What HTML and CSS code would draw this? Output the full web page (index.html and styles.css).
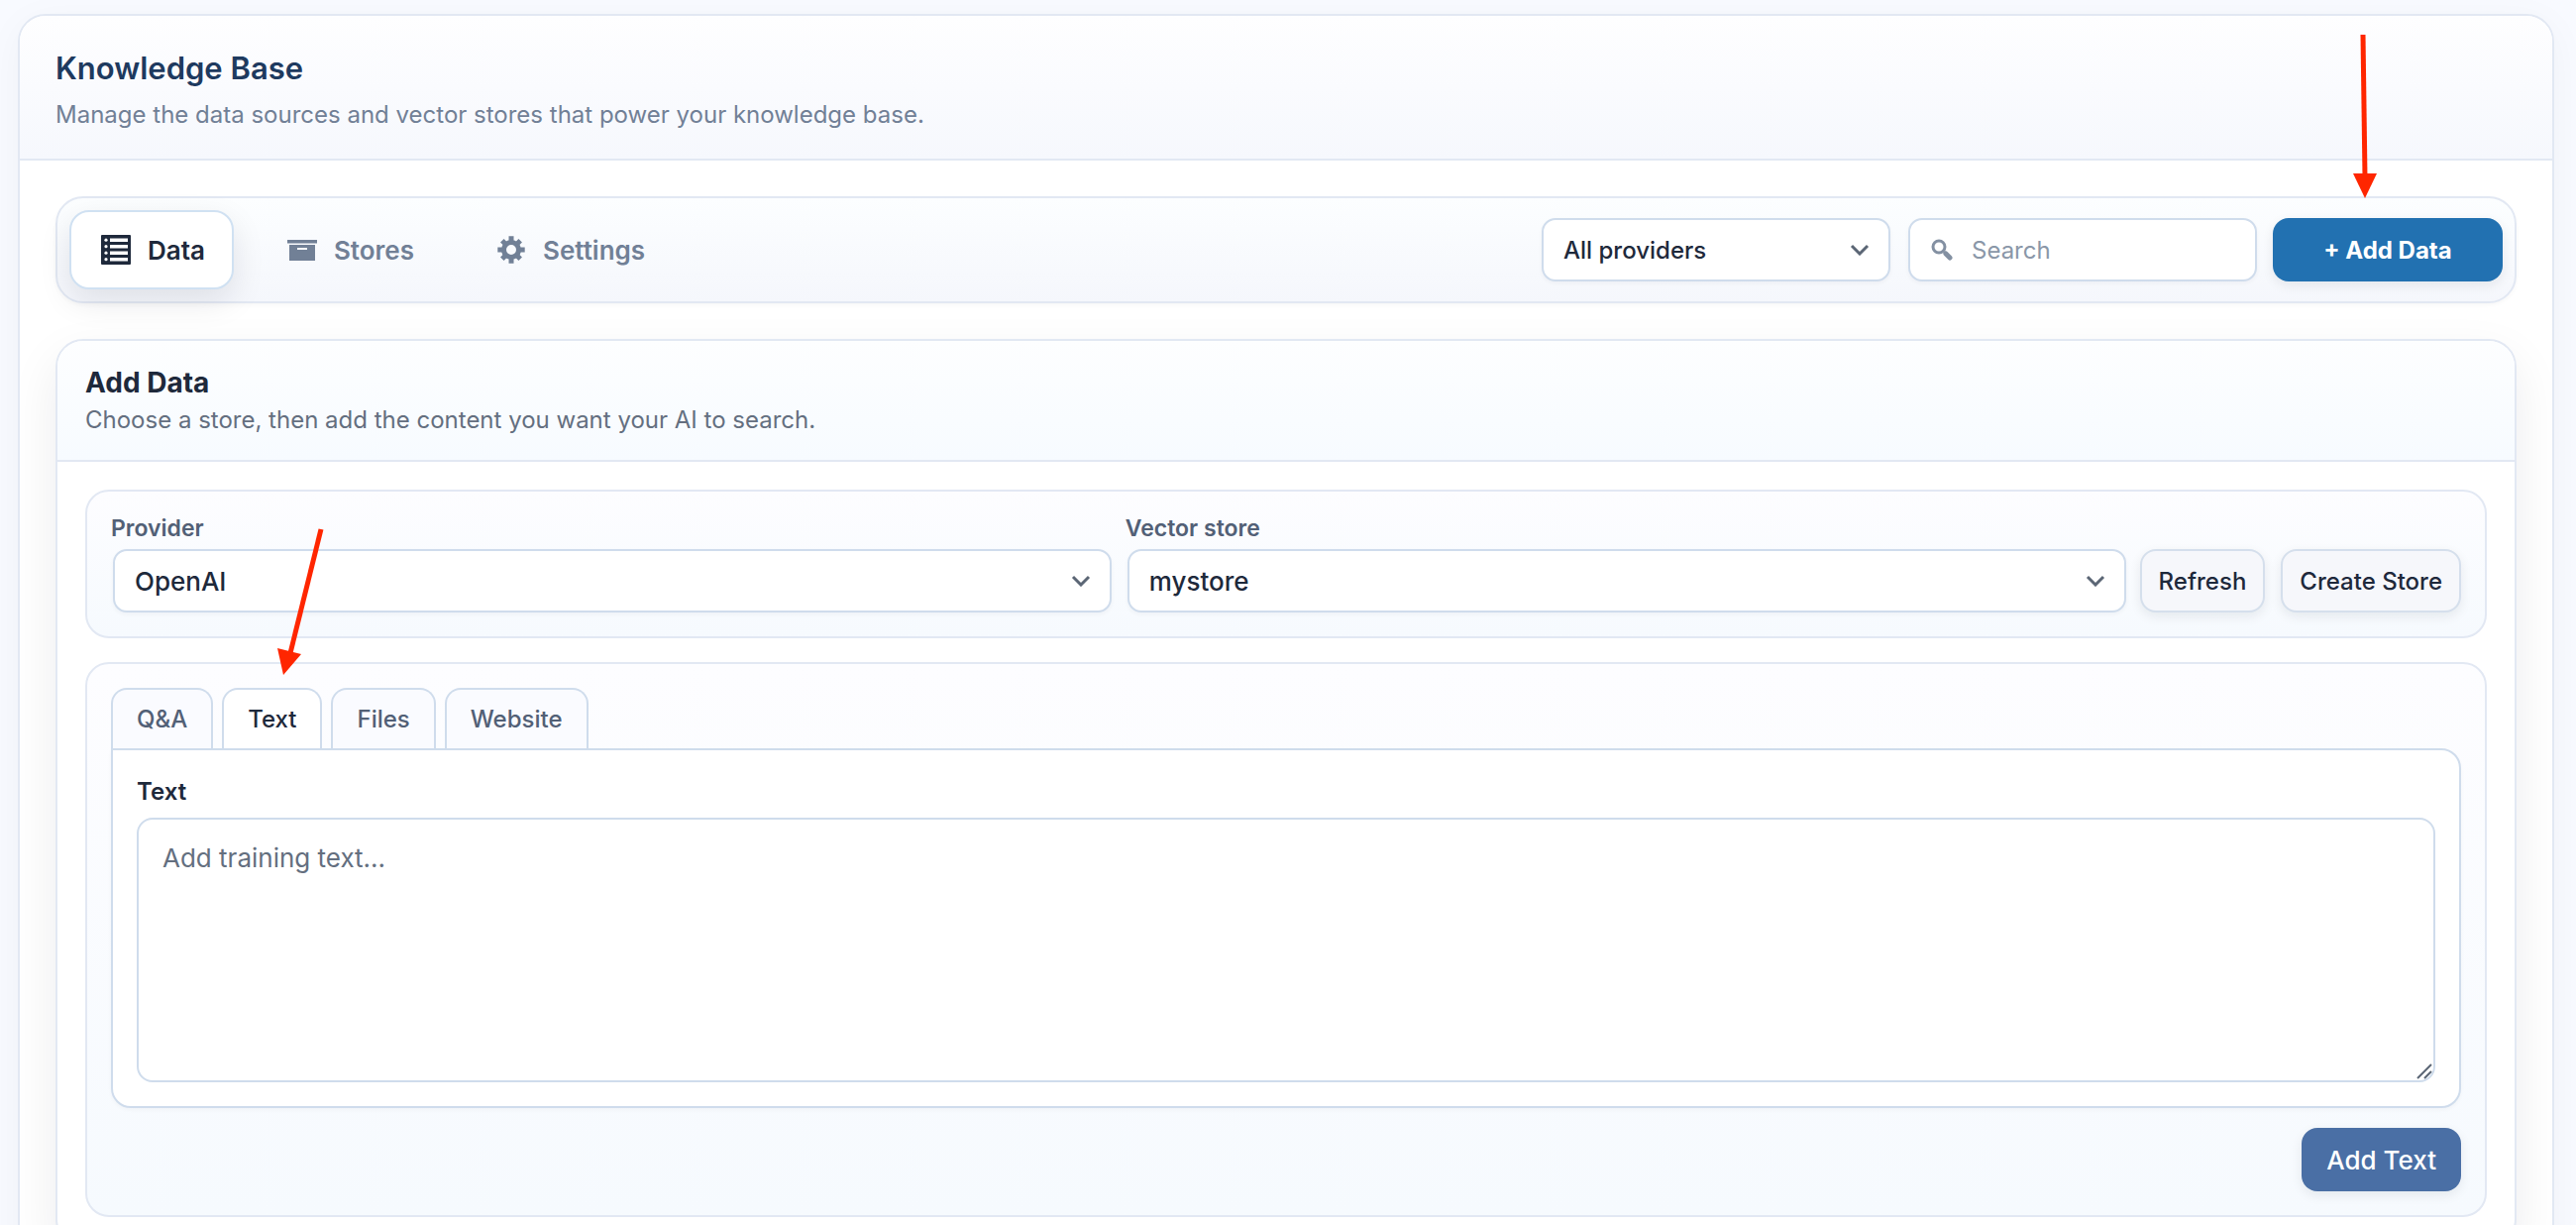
FILE: index.html
```html
<!DOCTYPE html>
<html lang="en">
<head>
    <meta charset="UTF-8">
    <meta name="viewport" content="width=device-width, initial-scale=1.0">
    <title>Knowledge Base</title>
    <link rel="stylesheet" href="styles.css">
</head>
<body>
    <main class="kb-card">
        <header class="kb-header">
            <h1>Knowledge Base</h1>
            <p>Manage the data sources and vector stores that power your knowledge base.</p>
        </header>

        <div class="kb-body">
            <div class="toolbar">
                <nav class="main-tabs">
                    <button type="button" class="main-tab active">
                        <svg class="icon" viewBox="0 0 36 36" aria-hidden="true">
                            <path fill="currentColor" fill-rule="evenodd" d="M4 3h28a1 1 0 0 1 1 1v28a1 1 0 0 1-1 1H4a1 1 0 0 1-1-1V4a1 1 0 0 1 1-1zM12 6.500v3.500h18V6.500zM12 13v3.500h18V13zM12 19.500V23h18v-3.500zM12 26v3.500h18V26z"/>
                            <g fill="#fff"><circle cx="8" cy="8.200" r="1.600"/><circle cx="8" cy="14.700" r="1.600"/><circle cx="8" cy="21.200" r="1.600"/><circle cx="8" cy="27.700" r="1.600"/></g>
                        </svg>
                        Data
                    </button>
                    <button type="button" class="main-tab">
                        <svg class="icon" viewBox="0 0 36 36" aria-hidden="true">
                            <path fill="currentColor" fill-rule="evenodd" d="M3 8h30v3.500H3zM5 13h26v16H5zM13 16v2h10v-2z"/>
                        </svg>
                        Stores
                    </button>
                    <button type="button" class="main-tab">
                        <svg class="icon" viewBox="0 0 36 36" aria-hidden="true">
                            <g fill="none" stroke="currentColor" stroke-width="5">
                                <circle cx="18" cy="18" r="7.500"/>
                                <path d="M18 4.300v5M18 26.700v5M4.300 18h5M26.700 18h5M8.800 8.800l3.500 3.500M23.700 23.700l3.500 3.500M27.200 8.800l-3.500 3.500M12.300 23.700l-3.500 3.500"/>
                            </g>
                        </svg>
                        Settings
                    </button>
                </nav>

                <div class="toolbar-actions">
                    <div class="select-wrap">
                        <select class="control" id="provider-filter" aria-label="Filter by provider">
                            <option>All providers</option>
                        </select>
                        <svg class="chevron" viewBox="0 0 20 12" aria-hidden="true"><path d="M2 2l8 8 8-8"/></svg>
                    </div>
                    <div class="search-wrap">
                        <svg class="search-icon" viewBox="0 0 24 24" aria-hidden="true">
                            <circle cx="9" cy="9" r="6"/><path class="handle" d="M14 14l2 2"/><path class="handle-end" d="M16 16l4 4"/>
                        </svg>
                        <input class="control" type="search" placeholder="Search" aria-label="Search">
                    </div>
                    <button type="button" class="btn btn-add-data">+ Add Data</button>
                </div>
            </div>

            <section class="panel">
                <header class="panel-header">
                    <h2>Add Data</h2>
                    <p>Choose a store, then add the content you want your AI to search.</p>
                </header>

                <div class="panel-body">
                    <div class="box store-row">
                        <div class="field">
                            <label for="provider">Provider</label>
                            <div class="select-wrap">
                                <select class="control" id="provider">
                                    <option>OpenAI</option>
                                </select>
                                <svg class="chevron" viewBox="0 0 20 12" aria-hidden="true"><path d="M2 2l8 8 8-8"/></svg>
                            </div>
                        </div>
                        <div class="field">
                            <label for="vector-store">Vector store</label>
                            <div class="select-wrap">
                                <select class="control" id="vector-store">
                                    <option>mystore</option>
                                </select>
                                <svg class="chevron" viewBox="0 0 20 12" aria-hidden="true"><path d="M2 2l8 8 8-8"/></svg>
                            </div>
                        </div>
                        <div class="store-actions">
                            <button type="button" class="btn btn-light">Refresh</button>
                            <button type="button" class="btn btn-light">Create Store</button>
                        </div>
                    </div>

                    <div class="box">
                        <div class="sub-tabs">
                            <button type="button" class="sub-tab">Q&amp;A</button>
                            <button type="button" class="sub-tab active">Text</button>
                            <button type="button" class="sub-tab">Files</button>
                            <button type="button" class="sub-tab">Website</button>
                        </div>
                        <div class="pane">
                            <label for="training-text">Text</label>
                            <div class="textarea-wrap">
                                <textarea id="training-text" placeholder="Add training text..."></textarea>
                                <svg class="grip" viewBox="0 0 16 16" aria-hidden="true"><path d="M1 15L15 1M8 15l7-7"/></svg>
                            </div>
                        </div>
                        <div class="form-actions">
                            <button type="button" class="btn btn-add-text">Add Text</button>
                        </div>
                    </div>
                </div>
            </section>
        </div>
    </main>

    <!-- Arrows pointing at the button and the tab -->
    <svg class="arrow arrow-add" viewBox="0 0 24 166" aria-hidden="true">
        <path class="shaft" d="M10 0l2 144"/><path class="head" d="M0 140h24L12 165z"/>
    </svg>
    <svg class="arrow arrow-text" viewBox="0 0 48 150" aria-hidden="true">
        <path class="shaft" d="M44 1L13 126"/><path class="head" d="M0 121l24 6L6 148z"/>
    </svg>
</body>
</html>
```
FILE: styles.css
```css
* {
    box-sizing: border-box;
}
body {
    margin: 0;
    padding: 14px 22px 0 18px;
    height: 100vh;
    overflow: hidden;
    position: relative;
    background-color: #f8faff;
    color: #1e293b;
    font-family: Inter, "Liberation Sans", sans-serif;
    font-size: 24px;
}
h1, h2, p {
    margin: 0;
}
button, input, select, textarea {
    font-family: inherit;
    font-size: 24px;
    color: inherit;
}
.kb-card {
    background-color: #fff;
    border: 2px solid #e2e8f3;
    border-radius: 28px;
    overflow: hidden;
    box-shadow: 0 8px 40px rgba(15, 23, 42, 0.04);
}
.kb-header {
    padding: 33px 36px 26px;
    background: linear-gradient(#fefeff, #f6f8fd);
    border-bottom: 2px solid #e2e8f3;
}
.kb-header h1 {
    font-size: 31px;
    line-height: 40px;
    font-weight: 600;
    color: #1e3a5f;
}
.kb-header p {
    margin-top: 9px;
    line-height: 36px;
    color: #718096;
}
.kb-body {
    padding: 36px;
}

/* Toolbar */
.toolbar {
    display: flex;
    justify-content: space-between;
    align-items: center;
    padding: 12px;
    margin-bottom: 36px;
    border: 2px solid #e2e8f3;
    border-radius: 28px;
    background: linear-gradient(#fcfeff, #f5f7fc);
    box-shadow: 0 2px 4px rgba(15, 23, 42, 0.03);
}
.main-tabs {
    display: flex;
    gap: 22px;
}
.main-tab {
    display: flex;
    align-items: center;
    gap: 14px;
    height: 80px;
    padding: 0 27px;
    border: 2px solid transparent;
    border-radius: 20px;
    background: none;
    color: #718096;
    font-size: 26px;
    font-weight: 600;
    cursor: pointer;
}
.main-tab.active {
    background-color: #fff;
    border-color: #d0e1f2;
    color: #1e293b;
    box-shadow: 0 12px 32px rgba(15, 23, 42, 0.1);
}
.icon {
    width: 36px;
    height: 36px;
}
.toolbar-actions {
    display: flex;
    gap: 16px;
}
.toolbar-actions .select-wrap,
.search-wrap {
    width: 352px;
}
.toolbar-actions .select-wrap {
    margin-right: 2px;
}

/* Controls */
.control {
    width: 100%;
    height: 64px;
    padding: 0 20px;
    border: 2px solid #cfdcec;
    border-radius: 14px;
    background-color: #fff;
    font-weight: 500;
    appearance: none;
    box-shadow: 0 2px 4px rgba(15, 23, 42, 0.04);
}
.select-wrap,
.search-wrap {
    position: relative;
    display: flex;
    align-items: center;
}
.chevron {
    position: absolute;
    right: 21px;
    width: 20px;
    height: 12px;
    fill: none;
    stroke: #5b6675;
    stroke-width: 3;
    pointer-events: none;
}
.search-wrap .control {
    padding-left: 62px;
    font-weight: 400;
}
.search-wrap .control::placeholder {
    color: #8a97a8;
    opacity: 1;
}
.search-icon {
    position: absolute;
    left: 22px;
    width: 24px;
    height: 24px;
    fill: none;
    stroke: #8390a2;
    stroke-width: 3;
}
.search-icon .handle-end {
    stroke-width: 5;
    stroke-linecap: round;
}
.btn {
    height: 64px;
    border: none;
    border-radius: 16px;
    color: #fff;
    font-weight: 600;
    white-space: nowrap;
    cursor: pointer;
    box-shadow: 0 4px 12px rgba(15, 23, 42, 0.08);
}
.btn-add-data {
    width: 232px;
    background-color: #2271b1;
    font-weight: 700;
}
.btn-light {
    padding: 0 17px;
    border: 2px solid #d5dfec;
    background-color: #f6f7fb;
    color: #1e293b;
    font-weight: 500;
}
.btn-add-text {
    padding: 0 25px;
    background-color: #4a6fa5;
    font-size: 26px;
    font-weight: 500;
}

/* Add data panel */
.panel {
    border: 2px solid #e2e8f3;
    border-radius: 28px;
    background-color: #fff;
    box-shadow: 0 20px 50px rgba(15, 23, 42, 0.08);
}
.panel-header {
    padding: 24px 28px 22px;
    border-bottom: 2px solid #e2e8f3;
    border-radius: 26px 26px 0 0;
    background: linear-gradient(#fdfeff, #f7fbff);
}
.panel-header h2 {
    font-size: 28px;
    line-height: 36px;
    font-weight: 700;
}
.panel-header p {
    margin-top: 2px;
    line-height: 36px;
    color: #646f7f;
}
.panel-body {
    display: flex;
    flex-direction: column;
    gap: 24px;
    padding: 28px;
}
.box {
    padding: 24px;
    border: 2px solid #e2e8f3;
    border-radius: 24px;
    background: linear-gradient(#fdfdff, #f6fafe);
}
.store-row {
    display: grid;
    grid-template-columns: 1fr 1fr auto;
    align-items: end;
    gap: 12px;
}
.field {
    display: flex;
    flex-direction: column;
    gap: 8px;
}
.field label {
    font-size: 23px;
    line-height: 26px;
    font-weight: 600;
    color: #526076;
}
.field .select-wrap {
    margin: 0 2px;
}
.field .control {
    font-size: 26px;
}
.store-actions {
    display: flex;
    gap: 16px;
}

/* Content type tabs */
.sub-tabs {
    display: flex;
    gap: 9px;
}
.sub-tab {
    height: 61px;
    padding: 0 24px;
    border: 2px solid #cfdcec;
    border-bottom: none;
    border-radius: 16px 16px 0 0;
    background-color: #fafbff;
    color: #526076;
    font-weight: 500;
    cursor: pointer;
}
.sub-tab.active {
    background-color: #fff;
    color: #1e293b;
}
.pane {
    padding: 24px;
    border: 2px solid #cfdcec;
    border-radius: 0 20px 20px 20px;
    background-color: #fff;
    box-shadow: 0 2px 4px rgba(15, 23, 42, 0.03);
}
.pane label {
    display: block;
    margin-bottom: 8px;
    line-height: 36px;
    font-weight: 600;
}
.textarea-wrap {
    position: relative;
}
.textarea-wrap textarea {
    display: block;
    width: 100%;
    height: 267px;
    padding: 20px 24px;
    border: 2px solid #cfdcec;
    border-radius: 16px;
    background-color: #fff;
    font-size: 26px;
    line-height: 38px;
    resize: none;
}
.textarea-wrap textarea::placeholder {
    color: #646f7f;
    opacity: 1;
}
.grip {
    position: absolute;
    right: 3px;
    bottom: 3px;
    width: 16px;
    height: 16px;
    fill: none;
    stroke: #5b6675;
    stroke-width: 2;
}
.form-actions {
    display: flex;
    justify-content: flex-end;
    margin-top: 20px;
}

/* Arrows */
.arrow {
    position: absolute;
    pointer-events: none;
}
.arrow .shaft {
    stroke: #ff2600;
    stroke-width: 5;
}
.arrow .head {
    fill: #ff2600;
}
.arrow-add {
    top: 35px;
    right: 201px;
    width: 24px;
    height: 166px;
}
.arrow-text {
    top: 533px;
    left: 280px;
    width: 48px;
    height: 150px;
}
```
